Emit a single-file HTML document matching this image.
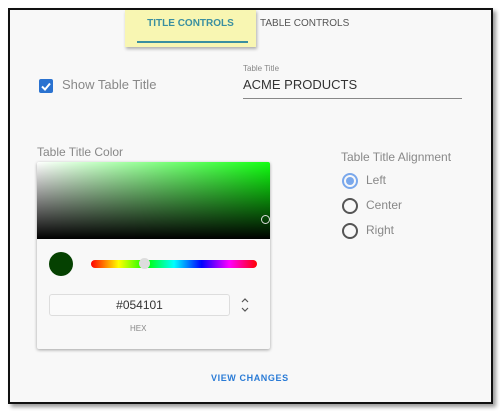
<!DOCTYPE html><html><head><style>
body{margin:0;width:500px;height:411px;background:#fff;font-family:"Liberation Sans",sans-serif;position:relative;overflow:hidden}
.a{position:absolute}
.frame{left:8px;top:8px;width:481px;height:392px;border:2px solid #111;background:#f8f8f8;box-shadow:3px 3px 4px rgba(0,0,0,.4)}
.g{color:#888}
.rad{width:12px;height:12px;border:2px solid #555;border-radius:50%}
</style></head><body>
<div class="a frame"></div>
<div class="a" style="left:125px;top:10px;width:131px;height:37px;background:#f8f6b2;box-shadow:1px 2px 3px rgba(0,0,0,.3)"></div>
<div class="a" style="left:125px;top:18px;width:131px;text-align:center;font-size:10px;font-weight:bold;color:#3a8fa0">TITLE CONTROLS</div>
<div class="a" style="left:137px;top:41px;width:111px;height:2px;background:#3a8fa0"></div>
<div class="a" style="left:260px;top:18px;font-size:10px;color:#555">TABLE CONTROLS</div>
<div class="a" style="left:39px;top:79px;width:14px;height:14px;background:#2a72d0;border-radius:2px"></div>
<svg class="a" style="left:39px;top:79px" width="14" height="14"><path d="M3 7.5l3 3 5-6" fill="none" stroke="#fff" stroke-width="2"/></svg>
<div class="a g" style="left:62px;top:77px;font-size:13px">Show Table Title</div>
<div class="a g" style="left:243px;top:64px;font-size:8px">Table Title</div>
<div class="a" style="left:243px;top:77px;font-size:13px;color:#333">ACME PRODUCTS</div>
<div class="a" style="left:243px;top:98px;width:219px;height:1px;background:#888"></div>
<div class="a g" style="left:37px;top:145px;font-size:12px">Table Title Color</div>
<div class="a" style="left:37px;top:162px;width:233px;height:187px;background:#f8f8f8;box-shadow:0 1px 3px rgba(0,0,0,.35);border-radius:2px"></div>
<div class="a" style="left:37px;top:162px;width:233px;height:77px;background:linear-gradient(to top,#000,transparent),linear-gradient(to right,#fff,#1f1);border-radius:2px 2px 0 0"></div>
<div class="a" style="left:261px;top:215px;width:7px;height:7px;border:1.5px solid #ddd;border-radius:50%"></div>
<div class="a" style="left:49px;top:252px;width:24px;height:24px;border-radius:50%;background:#054101"></div>
<div class="a" style="left:91px;top:260px;width:166px;height:8px;border-radius:4px;background:linear-gradient(to right,#f00,#ff0,#0f0,#0ff,#00f,#f0f,#f00)"></div>
<div class="a" style="left:139px;top:258px;width:11px;height:11px;border-radius:50%;background:#ddd"></div>
<div class="a" style="left:49px;top:294px;width:179px;height:20px;border:1px solid #ddd;border-radius:3px;background:#fafafa;text-align:center;font-size:12px;line-height:20px;color:#333">#054101</div>
<svg class="a" style="left:240px;top:297px" width="10" height="16"><path d="M2 5l3-3 3 3M2 11l3 3 3-3" fill="none" stroke="#555" stroke-width="1.2"/></svg>
<div class="a g" style="left:130px;top:324px;font-size:8px">HEX</div>
<div class="a g" style="left:341px;top:150px;font-size:12px">Table Title Alignment</div>
<div class="a rad" style="left:342px;top:173px;border-color:#7aa8ec"></div>
<div class="a" style="left:346px;top:177px;width:8px;height:8px;border-radius:50%;background:#7aa8ec"></div>
<div class="a rad" style="left:342px;top:198px"></div>
<div class="a rad" style="left:342px;top:223px"></div>
<div class="a g" style="left:366px;top:173px;font-size:12px">Left</div>
<div class="a g" style="left:366px;top:198px;font-size:12px">Center</div>
<div class="a g" style="left:366px;top:223px;font-size:12px">Right</div>
<div class="a" style="left:211px;top:373px;font-size:9px;font-weight:bold;letter-spacing:0.6px;color:#2a7bd6">VIEW CHANGES</div>
</body></html>
